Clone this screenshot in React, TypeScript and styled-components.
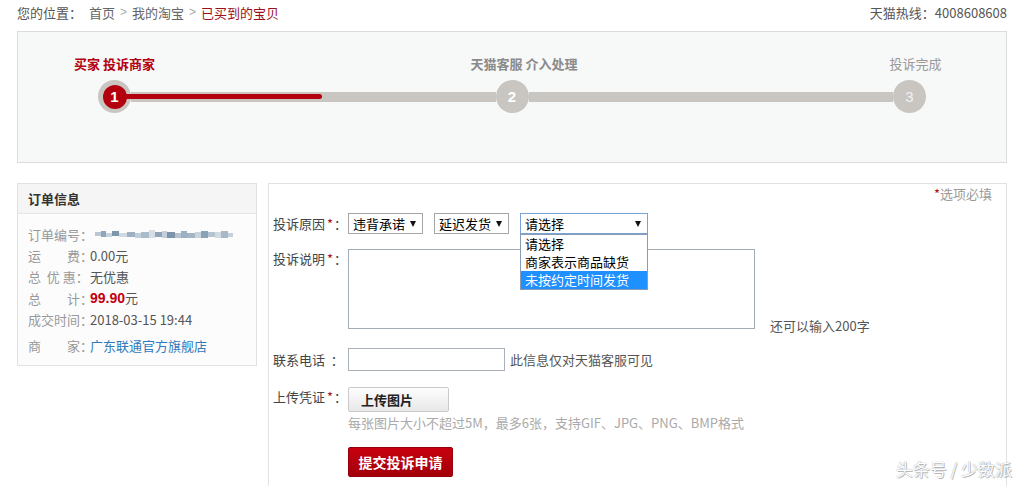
import React from "react";
import styled, { createGlobalStyle } from "styled-components";

const GlobalStyle = createGlobalStyle`
  html, body { margin: 0; padding: 0; background: #fff; }
  body {
    font-family: "Noto Sans CJK SC", "Liberation Sans", sans-serif;
    font-size: 13px;
    color: #444;
  }
  * { box-sizing: border-box; }
`;

const Page = styled.div`
  position: relative;
  width: 1024px;
  height: 486px;
  overflow: hidden;
  padding: 0 17px;
`;

const TopBar = styled.div`
  display: flex;
  justify-content: space-between;
  align-items: center;
  height: 25px;
  line-height: 25px;
  margin-bottom: 6px;
`;

const Crumbs = styled.div`
  display: flex;
  align-items: center;
`;

const CrumbLabel = styled.span`
  color: #555;
  margin-right: 7px;
`;

const Crumb = styled.a<{ $current?: boolean }>`
  color: ${(p) => (p.$current ? "#9e1018" : "#666")};
  text-decoration: none;
`;

const Sep = styled.span`
  margin: 0 5px;
  color: #aaa;
  font-family: "Liberation Sans", sans-serif;
  font-size: 12px;
`;

const Hotline = styled.div`
  color: #555;
`;

const StepsPanel = styled.div`
  border: 1px solid #dcdcdc;
  background: #f7f8f8;
  height: 132px;
  padding: 24px 80px 0 80px;
`;

const Track = styled.div`
  display: flex;
  align-items: flex-end;
`;

const Step = styled.div`
  flex: none;
  width: 33px;
  display: flex;
  flex-direction: column;
  align-items: center;
  gap: 8px;
  position: relative;
  z-index: 1;
`;

const StepLabel = styled.div<{ $tone: "active" | "mid" | "done"; $shift?: number }>`
  white-space: nowrap;
  line-height: 16px;
  font-size: 13px;
  font-weight: ${(p) => (p.$tone === "done" ? 400 : 700)};
  color: ${(p) => (p.$tone === "active" ? "#b3000f" : p.$tone === "mid" ? "#8a8a8a" : "#999")};
  transform: translateX(${(p) => p.$shift ?? 0}px);
`;

const Circle = styled.div<{ $light?: boolean }>`
  width: 33px;
  height: 33px;
  border-radius: 50%;
  background: #c9c5c0;
  display: flex;
  align-items: center;
  justify-content: center;
  color: ${(p) => (p.$light ? "#f2f2f2" : "#fff")};
  font-family: "Liberation Sans", sans-serif;
  font-weight: ${(p) => (p.$light ? 400 : 700)};
  font-size: 15px;
`;

const CircleCore = styled.div`
  width: 24px;
  height: 24px;
  border-radius: 50%;
  background: #b3000f;
  display: flex;
  align-items: center;
  justify-content: center;
  color: #fff;
  font-weight: 700;
  font-size: 15px;
`;

const Connector = styled.div`
  flex: 1;
  height: 10px;
  margin-bottom: 11px;
  background: #c9c5c0;
  position: relative;
  z-index: 2;
`;

const Progress = styled.div`
  position: absolute;
  left: -8px;
  top: 2px;
  height: 5px;
  border-radius: 3px;
  background: #b3000f;
`;

const Lower = styled.div`
  display: flex;
  align-items: flex-start;
  gap: 11px;
  margin-top: 20px;
`;

const InfoBox = styled.div`
  flex: none;
  width: 240px;
  border: 1px solid #e2e2e2;
  background: #fcfcfc;
`;

const InfoHeader = styled.div`
  height: 30px;
  line-height: 29px;
  background: #f5f5f5;
  border-bottom: 1px solid #e6e6e6;
  padding-left: 10px;
  font-weight: 700;
  color: #333;
`;

const InfoBody = styled.div`
  padding: 10px 10px 9px 10px;
`;

const InfoLine = styled.div<{ $gap?: number }>`
  display: flex;
  align-items: center;
  line-height: 21px;
  margin-top: ${(p) => p.$gap ?? 0}px;
  white-space: nowrap;
`;

const InfoLabel = styled.span`
  flex: none;
  width: 62px;
  color: #999;
`;

const InfoValue = styled.span`
  color: #555;
`;

const Price = styled.b`
  color: #c2000e;
  font-family: "Liberation Sans", sans-serif;
  font-size: 14px;
`;

const ShopLink = styled.a`
  color: #2f7bbd;
  text-decoration: none;
`;

const Mosaic = styled.svg`
  margin-left: 5px;
  display: block;
`;

const FormBox = styled.div`
  flex: 1;
  height: 320px;
  border: 1px solid #e2e2e2;
  padding: 2px 14px 0 4px;
`;

const Note = styled.div`
  text-align: right;
  line-height: 16px;
  color: #999;
`;

const Req = styled.span`
  color: #a8101a;
  margin: 0 1px 0 2px;
`;

const ReqNote = styled.span`
  color: #a8101a;
`;

const Row = styled.div<{ $top: number; $align?: string }>`
  display: flex;
  align-items: ${(p) => p.$align ?? "center"};
  margin-top: ${(p) => p.$top}px;
`;

const FieldLabel = styled.div`
  flex: none;
  width: 75px;
  line-height: 20px;
  color: #444;
  white-space: nowrap;
`;

const Selects = styled.div`
  display: flex;
  gap: 11px;
`;

const SelectWrap = styled.div`
  position: relative;
`;

const SelectBox = styled.div<{ $width: number; $focused?: boolean }>`
  width: ${(p) => p.$width}px;
  height: 21px;
  border: 1px solid ${(p) => (p.$focused ? "#7aa3d4" : "#a6a6a6")};
  background: #fff;
  display: flex;
  align-items: center;
  justify-content: space-between;
  padding: 0 6px 0 4px;
  color: #000;
  line-height: 19px;
`;

const Caret = styled.span`
  width: 0;
  height: 0;
  border-left: 3.5px solid transparent;
  border-right: 3.5px solid transparent;
  border-top: 6px solid #111;
`;

const Dropdown = styled.div`
  position: absolute;
  left: 0;
  top: 100%;
  width: 100%;
  border: 1px solid #8a9bb4;
  background: #fff;
  z-index: 5;
`;

const Option = styled.div<{ $hl?: boolean }>`
  height: 18px;
  line-height: 18px;
  padding-left: 4px;
  white-space: nowrap;
  color: ${(p) => (p.$hl ? "#fff" : "#000")};
  background: ${(p) => (p.$hl ? "#1e90ff" : "transparent")};
`;

const TextArea = styled.textarea`
  width: 407px;
  height: 80px;
  border: 1px solid #a4acb6;
  resize: none;
  padding: 2px;
  margin: 0;
  font: inherit;
  display: block;
`;

const Counter = styled.div`
  align-self: flex-end;
  margin-left: 15px;
  margin-bottom: -7px;
  line-height: 20px;
  color: #555;
`;

const Input = styled.input`
  width: 157px;
  height: 23px;
  border: 1px solid #a9b0b8;
  margin: 0;
  padding: 2px;
  font: inherit;
`;

const Aside = styled.span`
  margin-left: 5px;
  color: #555;
`;

const FieldColumn = styled.div`
  display: flex;
  flex-direction: column;
  align-items: flex-start;
`;

const UploadButton = styled.button`
  width: 101px;
  height: 25px;
  border: 1px solid #cacaca;
  border-radius: 2px;
  background: linear-gradient(#fdfdfd, #e8e8e8);
  font: inherit;
  font-weight: 700;
  color: #222;
  text-align: left;
  padding: 0 0 0 12px;
`;

const Hint = styled.div`
  margin-top: 1px;
  line-height: 20px;
  color: #aaa;
  white-space: nowrap;
`;

const SubmitRow = styled.div`
  padding-left: 75px;
  margin-top: 14px;
`;

const SubmitButton = styled.button`
  width: 105px;
  height: 30px;
  border: 1px solid #95000a;
  border-radius: 2px;
  background: linear-gradient(#c9000f, #a2000b);
  color: #fff;
  font: inherit;
  font-size: 14px;
  font-weight: 700;
  padding: 0;
`;

const Watermark = styled.div`
  position: absolute;
  right: 12px;
  bottom: 5px;
  font-size: 17px;
  color: #fff;
  text-shadow: 0 0 1px #888, 1px 1px 0 rgba(0, 0, 0, 0.25);
  white-space: nowrap;
`;

const mosaicCells: [number, number, number, number, string][] = [
  [0, 2, 6, 4, "#b9c7d4"], [6, 1, 5, 6, "#8fa6bb"], [11, 3, 6, 4, "#c8d3dd"],
  [17, 1, 7, 5, "#7f97ad"], [24, 3, 8, 4, "#d0d9e1"], [32, 2, 8, 5, "#9db1c3"],
  [40, 3, 6, 5, "#c2ced9"], [46, 2, 8, 6, "#a9bccb"], [54, 0, 6, 8, "#d6dde4"],
  [60, 2, 7, 5, "#8ea4b8"], [67, 1, 5, 7, "#c4cfd9"], [72, 2, 8, 6, "#7b93a9"],
  [80, 3, 6, 5, "#b2c2cf"], [86, 1, 6, 7, "#9bb0c2"], [92, 3, 8, 5, "#a3b5c5"],
  [100, 2, 6, 6, "#c9d3dc"], [106, 1, 7, 7, "#8aa1b6"], [113, 2, 7, 5, "#b5c4d1"],
  [120, 2, 6, 6, "#d2dae2"], [126, 1, 7, 7, "#a7b9c8"], [133, 3, 5, 4, "#c6d1db"],
];

export default function App() {
  return (
    <Page>
      <GlobalStyle />
      <TopBar>
        <Crumbs>
          <CrumbLabel>您的位置：</CrumbLabel>
          <Crumb>首页</Crumb>
          <Sep>&gt;</Sep>
          <Crumb>我的淘宝</Crumb>
          <Sep>&gt;</Sep>
          <Crumb $current>已买到的宝贝</Crumb>
        </Crumbs>
        <Hotline>天猫热线：4008608608</Hotline>
      </TopBar>

      <StepsPanel>
        <Track>
          <Step>
            <StepLabel $tone="active">买家 投诉商家</StepLabel>
            <Circle>
              <CircleCore>1</CircleCore>
            </Circle>
          </Step>
          <Connector>
            <Progress style={{ width: 199 }} />
          </Connector>
          <Step>
            <StepLabel $tone="mid" $shift={12}>天猫客服 介入处理</StepLabel>
            <Circle>2</Circle>
          </Step>
          <Connector />
          <Step>
            <StepLabel $tone="done" $shift={6}>投诉完成</StepLabel>
            <Circle $light>3</Circle>
          </Step>
        </Track>
      </StepsPanel>

      <Lower>
        <InfoBox>
          <InfoHeader>订单信息</InfoHeader>
          <InfoBody>
            <InfoLine>
              <InfoLabel>订单编号：</InfoLabel>
              <Mosaic width="138" height="10" viewBox="0 0 138 10">
                <defs>
                  <filter id="soft">
                    <feGaussianBlur stdDeviation="0.5" />
                  </filter>
                </defs>
                <g filter="url(#soft)">
                  {mosaicCells.map(([x, y, w, h, c], i) => (
                    <rect key={i} x={x} y={y} width={w} height={h} fill={c} />
                  ))}
                </g>
              </Mosaic>
            </InfoLine>
            <InfoLine>
              <InfoLabel>运　　费：</InfoLabel>
              <InfoValue>0.00元</InfoValue>
            </InfoLine>
            <InfoLine>
              <InfoLabel>总&nbsp;&nbsp;优&nbsp;惠：</InfoLabel>
              <InfoValue>无优惠</InfoValue>
            </InfoLine>
            <InfoLine>
              <InfoLabel>总　　计：</InfoLabel>
              <InfoValue>
                <Price>99.90</Price>元
              </InfoValue>
            </InfoLine>
            <InfoLine>
              <InfoLabel>成交时间：</InfoLabel>
              <InfoValue>2018-03-15 19:44</InfoValue>
            </InfoLine>
            <InfoLine $gap={5}>
              <InfoLabel>商　　家：</InfoLabel>
              <ShopLink>广东联通官方旗舰店</ShopLink>
            </InfoLine>
          </InfoBody>
        </InfoBox>

        <FormBox>
          <Note>
            <ReqNote>*</ReqNote>选项必填
          </Note>

          <Row $top={11}>
            <FieldLabel>
              投诉原因<Req>*</Req>：
            </FieldLabel>
            <Selects>
              <SelectBox $width={75}>
                违背承诺 <Caret />
              </SelectBox>
              <SelectBox $width={75}>
                延迟发货 <Caret />
              </SelectBox>
              <SelectWrap>
                <SelectBox $width={128} $focused>
                  请选择 <Caret />
                </SelectBox>
                <Dropdown>
                  <Option>请选择</Option>
                  <Option>商家表示商品缺货</Option>
                  <Option $hl>未按约定时间发货</Option>
                </Dropdown>
              </SelectWrap>
            </Selects>
          </Row>

          <Row $top={15} $align="flex-start">
            <FieldLabel>
              投诉说明<Req>*</Req>：
            </FieldLabel>
            <TextArea />
            <Counter>还可以输入200字</Counter>
          </Row>

          <Row $top={19}>
            <FieldLabel>联系电话 &nbsp;：</FieldLabel>
            <Input type="text" />
            <Aside>此信息仅对天猫客服可见</Aside>
          </Row>

          <Row $top={16} $align="flex-start">
            <FieldLabel>
              上传凭证<Req>*</Req>：
            </FieldLabel>
            <FieldColumn>
              <UploadButton type="button">上传图片</UploadButton>
              <Hint>每张图片大小不超过5M，最多6张，支持GIF、JPG、PNG、BMP格式</Hint>
            </FieldColumn>
          </Row>

          <SubmitRow>
            <SubmitButton type="button">提交投诉申请</SubmitButton>
          </SubmitRow>
        </FormBox>
      </Lower>

      <Watermark>头条号 / 少数派</Watermark>
    </Page>
  );
}
